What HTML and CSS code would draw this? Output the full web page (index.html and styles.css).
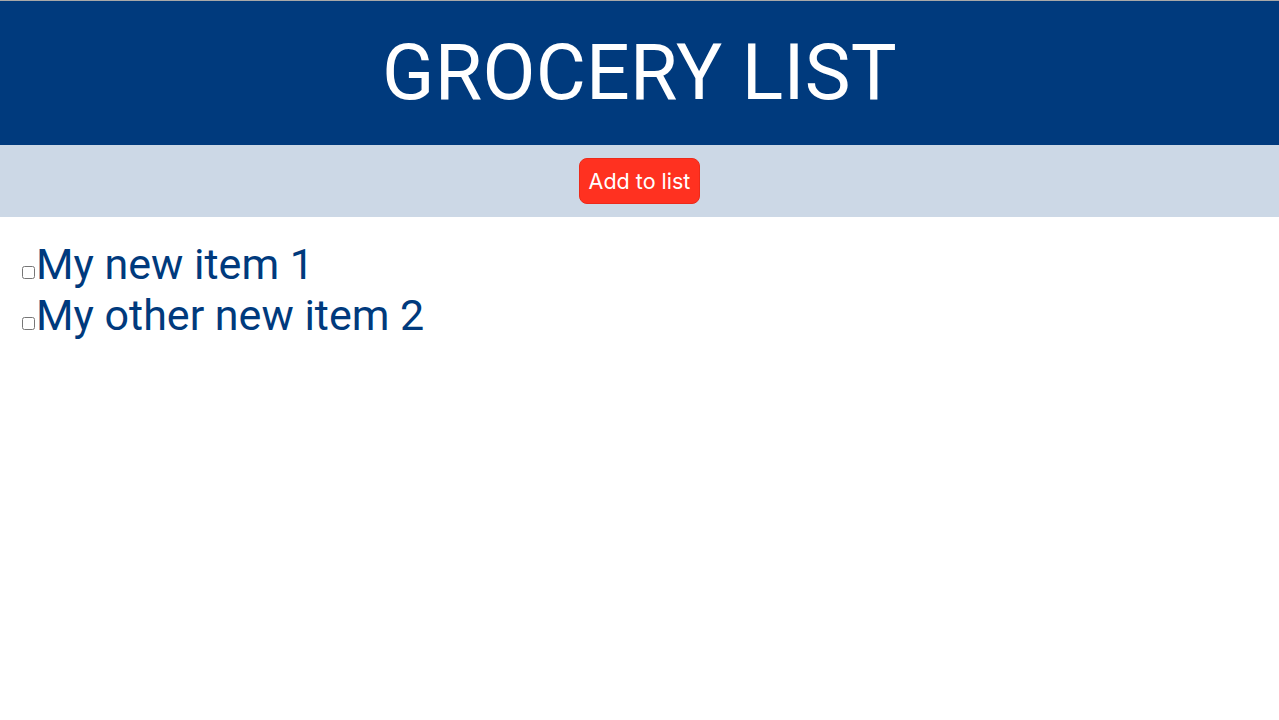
FILE: index.html
```html
<!DOCTYPE html>
<html>
<head>
<meta charset="utf-8">
<link rel="stylesheet" href="styles.css">
</head>
<body>
<header class="header">
  <h1 class="title">GROCERY LIST</h1>
</header>
<div class="toolbar">
  <button class="add-btn">Add to list</button>
</div>
<ul class="list">
  <li class="item"><input type="checkbox" class="check"><span>My new item 1</span></li>
  <li class="item"><input type="checkbox" class="check"><span>My other new item 2</span></li>
</ul>
</body>
</html>
```
FILE: styles.css
```css
html, body {
  margin: 0;
  padding: 0;
  background: #ffffff;
  font-family: Roboto, "Liberation Sans", sans-serif;
}
body {
  border-top: 1px solid #a8a8a8;
}
.header {
  background: #003a7d;
  height: 144px;
  display: flex;
  align-items: center;
  justify-content: center;
}
.title {
  margin: 0;
  color: #ffffff;
  font-weight: 400;
  font-size: 77px;
  letter-spacing: 0.25px;
}
.toolbar {
  background: #ccd8e6;
  height: 72px;
  display: flex;
  align-items: center;
  justify-content: center;
}
.add-btn {
  background: #ff3120;
  color: #ffffff;
  border: 1px solid #ec2a1a;
  border-radius: 8px;
  font-family: Inter, Roboto, sans-serif;
  font-size: 21.5px;
  padding: 0 9px;
  height: 46px;
}
.list {
  list-style: none;
  margin: 0;
  padding: 22px 0 0 18px;
}
.item {
  color: #003a7d;
  font-size: 43px;
  line-height: 51px;
}
.check {
  margin: 0 1px 0 4px;
}
```
